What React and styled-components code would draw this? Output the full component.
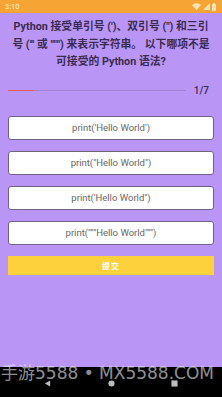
import React from "react";
import styled, { createGlobalStyle } from "styled-components";

const Global = createGlobalStyle`
  html, body { margin: 0; padding: 0; background: #000; }
  body { width: 222px; height: 397px; overflow: hidden; font-family: Roboto, "Noto Sans CJK SC", sans-serif; }
`;

const Screen = styled.div`
  position: relative;
  width: 222px;
  height: 397px;
  display: flex;
  flex-direction: column;
  overflow: hidden;
`;

const StatusBar = styled.div`
  height: 13px;
  background: #f6a434;
  display: flex;
  align-items: center;
  justify-content: space-between;
  padding: 0 6px 0 5px;
  color: #fff3dd;
  font-size: 7.5px;
`;

const StatusIcons = styled.div`
  display: flex;
  align-items: center;
  gap: 2px;
`;

const Main = styled.div`
  flex: 1;
  background: #b996f6;
  display: flex;
  flex-direction: column;
  padding: 5px 8px 0 8px;
`;

const Question = styled.div`
  font-family: Roboto, "Noto Sans CJK SC", sans-serif;
  font-weight: 700;
  font-size: 10.8px;
  line-height: 17.5px;
  color: #3a2b52;
  text-align: center;
  white-space: nowrap;
`;

const ProgressRow = styled.div`
  display: flex;
  align-items: center;
  margin-top: 14px;
  height: 12px;
`;

const Track = styled.div`
  flex: 1;
  height: 1.5px;
  background: #9f82d6;
`;

const Fill = styled.div`
  height: 100%;
  background: #e65a55;
`;

const Count = styled.div`
  width: 28px;
  text-align: right;
  font-size: 10px;
  font-weight: 500;
  color: #3a2b52;
  padding-right: 5px;
  box-sizing: border-box;
`;

const Options = styled.div`
  display: flex;
  flex-direction: column;
  gap: 11px;
  margin-top: 19px;
`;

const Option = styled.div`
  height: 24px;
  box-sizing: border-box;
  background: #fff;
  border: 1px solid #6f6285;
  border-radius: 3px;
  display: flex;
  align-items: center;
  justify-content: center;
  font-size: 9.5px;
  color: #666;
`;

const Submit = styled.div`
  height: 19px;
  background: #fdd13b;
  display: flex;
  align-items: center;
  justify-content: center;
  color: #fff;
  font-size: 8px;
  font-weight: 700;
  letter-spacing: 1px;
`;

const NavBar = styled.div`
  height: 28px;
  background: #000;
  display: flex;
  align-items: center;
  justify-content: space-between;
  padding: 2px 44px 0 44px;
`;

const Watermark = styled.div`
  position: absolute;
  top: 362px;
  left: 1px;
  white-space: nowrap;
  font-family: "DejaVu Sans", "Noto Sans CJK SC", sans-serif;
  font-size: 17px;
  line-height: 22px;
  color: rgba(235, 235, 240, 0.62);
  pointer-events: none;
`;

const options = [
  "print('Hello World')",
  'print("Hello World")',
  "print('Hello World\")",
  'print("""Hello World""")',
];

export default function App() {
  return (
    <>
      <Global />
      <Screen>
        <StatusBar>
          <span>3:10</span>
          <StatusIcons>
            <svg width="9" height="7" viewBox="0 0 9 7">
              <path d="M0 2 A6.5 6.5 0 0 1 9 2 L4.5 7 Z" fill="#fde2b8" />
            </svg>
            <svg width="7" height="7" viewBox="0 0 7 7">
              <path d="M0 7 L7 0 L7 7 Z" fill="#fde2b8" />
            </svg>
            <svg width="4" height="8" viewBox="0 0 4 8">
              <rect x="0" y="1" width="4" height="7" fill="#fde2b8" />
              <rect x="1" y="0" width="2" height="1" fill="#fde2b8" />
            </svg>
          </StatusIcons>
        </StatusBar>
        <Main>
          <Question>
            Python 接受单引号 (')、双引号 (") 和三引
            <br />
            号 (''' 或 """) 来表示字符串。 以下哪项不是
            <br />
            可接受的 Python 语法?
          </Question>
          <ProgressRow>
            <Track>
              <Fill style={{ width: `${(1 / 7) * 100}%` }} />
            </Track>
            <Count>1/7</Count>
          </ProgressRow>
          <Options>
            {options.map((o) => (
              <Option key={o}>{o}</Option>
            ))}
            <Submit>提交</Submit>
          </Options>
        </Main>
        <NavBar>
          <svg width="7" height="7" viewBox="0 0 8 8">
            <path d="M1 4 L7 0.5 L7 7.5 Z" fill="#bdbdbd" />
          </svg>
          <svg width="7" height="7" viewBox="0 0 8 8">
            <circle cx="4" cy="4" r="3.5" fill="#bdbdbd" />
          </svg>
          <svg width="7" height="7" viewBox="0 0 8 8">
            <rect x="0.5" y="0.5" width="7" height="7" fill="#bdbdbd" />
          </svg>
        </NavBar>
        <Watermark>手游5588 • MX5588.COM</Watermark>
      </Screen>
    </>
  );
}
